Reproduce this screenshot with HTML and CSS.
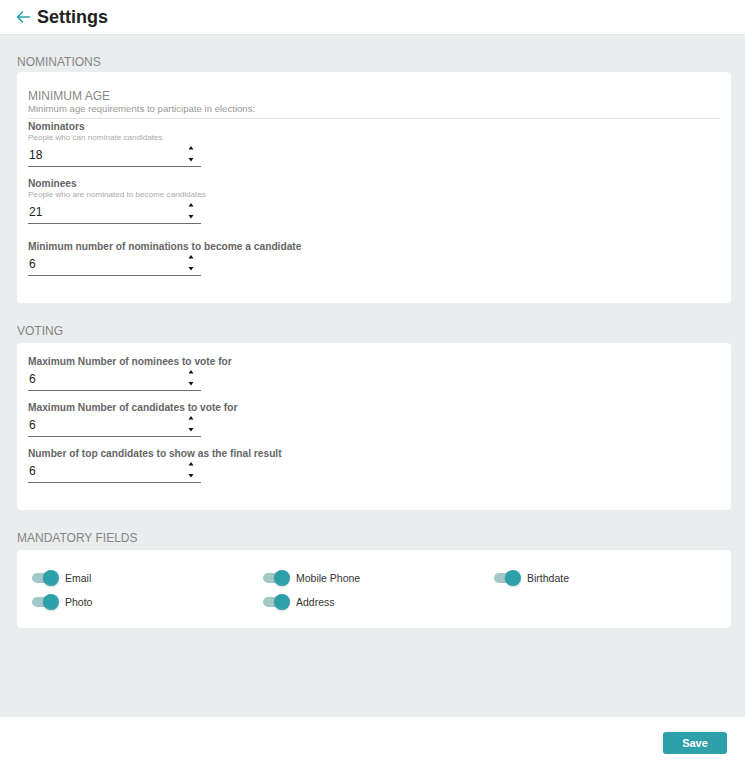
FILE: index.html
```html
<!DOCTYPE html>
<html lang="en">
<head>
<meta charset="utf-8">
<title>Settings</title>
<link rel="stylesheet" href="styles.css">
</head>
<body>
<header class="topbar">
  <svg class="back" width="14" height="12" viewBox="0 0 14 12" aria-hidden="true"><path d="M13.5 6H1.5M6.5 1L1.5 6L6.5 11" fill="none" stroke="#2ea0a9" stroke-width="1.6" stroke-linecap="round" stroke-linejoin="round"/></svg>
  <h1 class="title">Settings</h1>
</header>

<main class="content">
  <h2 class="section-title section-title--first">NOMINATIONS</h2>
  <section class="card card--nominations">
    <div class="group-title">MINIMUM AGE</div>
    <div class="group-sub">Minimum age requirements to participate in elections:</div>
    <div class="divider"></div>

    <div class="field field--first">
      <div class="label">Nominators</div>
      <div class="hint">People who can nominate candidates</div>
      <div class="num-input"><span class="value">18</span><svg class="spin" width="6" height="24" viewBox="0 0 6 24"><path d="M0.5 6.5L5.5 6.5L3 3Z M0.5 15L5.5 15L3 18.5Z" fill="#111"/></svg></div>
    </div>
    <div class="field">
      <div class="label">Nominees</div>
      <div class="hint">People who are nominated to become candidates</div>
      <div class="num-input"><span class="value">21</span><svg class="spin" width="6" height="24" viewBox="0 0 6 24"><path d="M0.5 6.5L5.5 6.5L3 3Z M0.5 15L5.5 15L3 18.5Z" fill="#111"/></svg></div>
    </div>
    <div class="field field--plain field--spaced">
      <div class="label">Minimum number of nominations to become a candidate</div>
      <div class="num-input"><span class="value">6</span><svg class="spin" width="6" height="24" viewBox="0 0 6 24"><path d="M0.5 6.5L5.5 6.5L3 3Z M0.5 15L5.5 15L3 18.5Z" fill="#111"/></svg></div>
    </div>
  </section>

  <h2 class="section-title">VOTING</h2>
  <section class="card card--voting">
    <div class="field field--plain field--first">
      <div class="label">Maximum Number of nominees to vote for</div>
      <div class="num-input"><span class="value">6</span><svg class="spin" width="6" height="24" viewBox="0 0 6 24"><path d="M0.5 6.5L5.5 6.5L3 3Z M0.5 15L5.5 15L3 18.5Z" fill="#111"/></svg></div>
    </div>
    <div class="field field--plain">
      <div class="label">Maximum Number of candidates to vote for</div>
      <div class="num-input"><span class="value">6</span><svg class="spin" width="6" height="24" viewBox="0 0 6 24"><path d="M0.5 6.5L5.5 6.5L3 3Z M0.5 15L5.5 15L3 18.5Z" fill="#111"/></svg></div>
    </div>
    <div class="field field--plain">
      <div class="label">Number of top candidates to show as the final result</div>
      <div class="num-input"><span class="value">6</span><svg class="spin" width="6" height="24" viewBox="0 0 6 24"><path d="M0.5 6.5L5.5 6.5L3 3Z M0.5 15L5.5 15L3 18.5Z" fill="#111"/></svg></div>
    </div>
  </section>

  <h2 class="section-title">MANDATORY FIELDS</h2>
  <section class="card card--mandatory">
    <div class="toggles">
      <label class="toggle-item"><span class="toggle"><span class="track"></span><span class="thumb"></span></span><span class="toggle-label">Email</span></label>
      <label class="toggle-item"><span class="toggle"><span class="track"></span><span class="thumb"></span></span><span class="toggle-label">Mobile Phone</span></label>
      <label class="toggle-item"><span class="toggle"><span class="track"></span><span class="thumb"></span></span><span class="toggle-label">Birthdate</span></label>
      <label class="toggle-item"><span class="toggle"><span class="track"></span><span class="thumb"></span></span><span class="toggle-label">Photo</span></label>
      <label class="toggle-item"><span class="toggle"><span class="track"></span><span class="thumb"></span></span><span class="toggle-label">Address</span></label>
    </div>
  </section>
</main>

<footer class="footer">
  <button class="save" type="button">Save</button>
</footer>
</body>
</html>
```

FILE: styles.css
```css
* { box-sizing: border-box; }

html, body { height: 100%; }

body {
  margin: 0;
  height: 760px;
  display: flex;
  flex-direction: column;
  background: #eaedee;
  font-family: "Liberation Sans", Arial, sans-serif;
  color: #333;
}

.topbar {
  height: 35px;
  flex: 0 0 35px;
  background: #fff;
  display: flex;
  align-items: center;
  padding-left: 16px;
  gap: 7px;
  border-bottom: 1px solid #e4e7e8;
}

.back { display: block; }

.title {
  margin: 0;
  font-size: 18px;
  font-weight: bold;
  color: #222;
  line-height: 22px;
}

.content {
  flex: 1;
  padding: 0 14px 0 17px;
}

.section-title {
  margin: 21px 0 5px;
  font-size: 12px;
  font-weight: normal;
  line-height: 14px;
  color: #858585;
}

.section-title--first { margin: 20px 0 3px; }

.card {
  background: #fff;
  border-radius: 4px;
  padding: 13px 11px 27px;
}

.card--nominations { padding-top: 17px; }

.card--mandatory { padding: 18px 11px 16px; }

.group-title {
  font-size: 12px;
  line-height: 14px;
  color: #888;
}

.group-sub {
  font-size: 9.6px;
  line-height: 11px;
  color: #999;
}

.divider {
  margin-top: 4px;
  border-top: 1px solid #e2e2e2;
}

.field { margin-top: 10px; }
.field--plain { margin-top: 11px; }
.field--first { margin-top: 1px; }
.card--voting .field--first { margin-top: 0; }
.field--spaced { margin-top: 17px; }

.label {
  font-size: 10.2px;
  font-weight: bold;
  line-height: 13px;
  color: #666;
}

.field--plain .label { line-height: 11px; }

.hint {
  font-size: 8.1px;
  line-height: 10px;
  color: #aaa;
}

.num-input {
  width: 173px;
  height: 24px;
  display: flex;
  align-items: center;
  justify-content: space-between;
  padding-right: 7px;
  border-bottom: 1px solid #6e6e6e;
}

.value {
  font-size: 12px;
  color: #222;
  padding-left: 1px;
}

.spin { display: block; }

.toggles {
  display: grid;
  grid-template-columns: repeat(3, 231px);
  row-gap: 4px;
  padding-left: 4px;
}

.toggle-item {
  display: flex;
  align-items: center;
  height: 20px;
  gap: 6px;
}

.toggle {
  position: relative;
  width: 27px;
  height: 16px;
  flex: 0 0 27px;
}

.track {
  position: absolute;
  left: 0;
  top: 3px;
  width: 22px;
  height: 10px;
  border-radius: 5px;
  background: #a2c8ca;
}

.thumb {
  position: absolute;
  left: 11px;
  top: 0;
  width: 16px;
  height: 16px;
  border-radius: 50%;
  background: #2ea0a9;
  box-shadow: 0 1px 2px rgba(0, 0, 0, 0.2);
}

.toggle-label {
  font-size: 10.5px;
  color: #333;
}

.footer {
  height: 43px;
  flex: 0 0 43px;
  background: #fff;
  display: flex;
  justify-content: flex-end;
  align-items: flex-start;
  padding: 15px 18px 0 0;
}

.save {
  width: 64px;
  height: 22px;
  border: 0;
  border-radius: 3px;
  background: #2ea0a9;
  color: #fff;
  font-family: "Liberation Sans", Arial, sans-serif;
  font-size: 11px;
  font-weight: bold;
  padding: 0;
}
```
